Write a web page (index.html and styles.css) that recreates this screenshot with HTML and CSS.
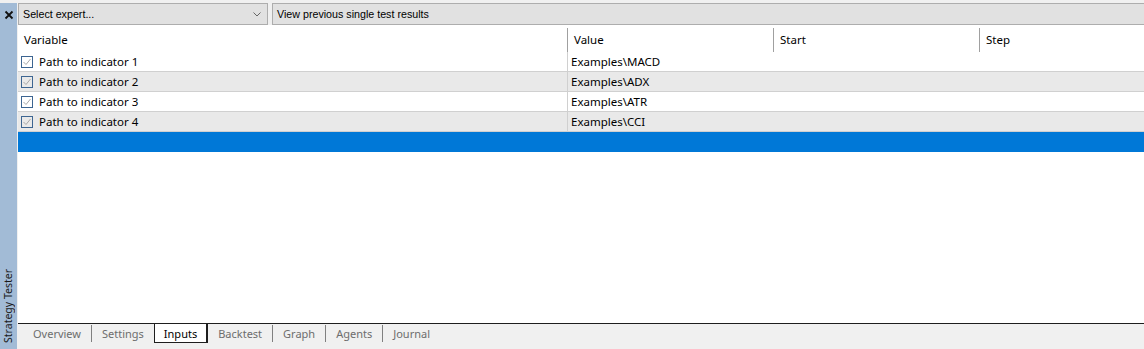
FILE: index.html
```html
<!DOCTYPE html>
<html>
<head>
<meta charset="utf-8">
<link rel="stylesheet" href="styles.css">
</head>
<body>
<div class="app">
  <aside class="sidebar">
    <svg class="close" width="10" height="10" viewBox="0 0 10 10"><path d="M1.5 1.5 L8.5 8.5 M8.5 1.5 L1.5 8.5" stroke="#111" stroke-width="1.8" fill="none"/></svg>
    <div class="side-title">Strategy Tester</div>
  </aside>
  <main class="main">
    <div class="toolbar">
      <div class="combo">
        <span>Select expert...</span>
        <svg class="chev" width="8" height="5" viewBox="0 0 8 5"><path d="M0.5 0.5 L4 4 L7.5 0.5" stroke="#666" stroke-width="1" fill="none"/></svg>
      </div>
      <div class="btn">View previous single test results</div>
    </div>
    <div class="table">
      <div class="thead">
        <div class="th">Variable</div>
        <div class="th sep">Value</div>
        <div class="th sep">Start</div>
        <div class="th sep">Step</div>
      </div>
      <div class="row">
        <div class="cell var"><span class="cb"><svg width="10" height="10" viewBox="0 0 10 10"><path d="M1.5 5 L4 7.5 L8.5 2" stroke="#a8a8a8" stroke-width="1" fill="none"/></svg></span>Path to indicator 1</div>
        <div class="cell val">Examples\MACD</div>
        <div class="cell"></div>
        <div class="cell"></div>
      </div>
      <div class="row alt">
        <div class="cell var"><span class="cb"><svg width="10" height="10" viewBox="0 0 10 10"><path d="M1.5 5 L4 7.5 L8.5 2" stroke="#a8a8a8" stroke-width="1" fill="none"/></svg></span>Path to indicator 2</div>
        <div class="cell val">Examples\ADX</div>
        <div class="cell"></div>
        <div class="cell"></div>
      </div>
      <div class="row">
        <div class="cell var"><span class="cb"><svg width="10" height="10" viewBox="0 0 10 10"><path d="M1.5 5 L4 7.5 L8.5 2" stroke="#a8a8a8" stroke-width="1" fill="none"/></svg></span>Path to indicator 3</div>
        <div class="cell val">Examples\ATR</div>
        <div class="cell"></div>
        <div class="cell"></div>
      </div>
      <div class="row alt">
        <div class="cell var"><span class="cb"><svg width="10" height="10" viewBox="0 0 10 10"><path d="M1.5 5 L4 7.5 L8.5 2" stroke="#a8a8a8" stroke-width="1" fill="none"/></svg></span>Path to indicator 4</div>
        <div class="cell val">Examples\CCI</div>
        <div class="cell"></div>
        <div class="cell"></div>
      </div>
      <div class="row selected"></div>
    </div>
    <nav class="tabs">
      <span class="tab">Overview</span>
      <span class="tsep"></span>
      <span class="tab">Settings</span>
      <span class="tab active">Inputs</span>
      <span class="tab">Backtest</span>
      <span class="tsep"></span>
      <span class="tab">Graph</span>
      <span class="tsep"></span>
      <span class="tab">Agents</span>
      <span class="tsep"></span>
      <span class="tab">Journal</span>
    </nav>
  </main>
</div>
</body>
</html>
```

FILE: styles.css
```css
* { box-sizing: border-box; }
html, body {
  margin: 0;
  padding: 0;
  width: 1144px;
  height: 349px;
  overflow: hidden;
  background: #f0f0f0;
  font-family: "Noto Sans", "Open Sans", sans-serif;
  font-size: 11.5px;
  color: #000;
}
.app {
  display: flex;
  height: 349px;
  padding-top: 3px;
}
.sidebar {
  width: 17px;
  flex: none;
  background: #a2bbd6;
  display: flex;
  flex-direction: column;
  align-items: center;
  justify-content: space-between;
  padding: 7px 0 6px 0;
}
.close { display: block; }
.side-title {
  writing-mode: vertical-rl;
  transform: rotate(180deg);
  font-size: 10.5px;
  color: #1a1a1a;
  line-height: 17px;
  white-space: nowrap;
}
.main {
  flex: 1;
  display: flex;
  flex-direction: column;
  margin-left: 1px;
  min-width: 0;
}
.toolbar {
  display: flex;
  gap: 4px;
  height: 22px;
  flex: none;
  background: #f0f0f0;
}
.combo, .btn {
  background: #e1e1e1;
  border: 1px solid #adadad;
  font-family: "Liberation Sans", Arial, sans-serif;
  font-size: 10.7px;
  display: flex;
  align-items: center;
  padding-left: 4px;
  height: 22px;
}
.combo {
  width: 250px;
  flex: none;
  justify-content: space-between;
  padding-right: 6px;
}
.chev { display: block; }
.btn {
  flex: 1;
  border-right: none;
}
.table {
  flex: 1;
  background: #fff;
  padding-top: 3px;
}
.thead, .row {
  display: grid;
  grid-template-columns: 549px 206px 206px 1fr;
}
.thead { height: 24px; }
.th {
  display: flex;
  align-items: center;
  padding-left: 6px;
  padding-bottom: 1px;
}
.th.sep { border-left: 1px solid #a0a0a0; }
.row {
  height: 20px;
  border-bottom: 1px solid #d0d0d0;
  background: #fff;
}
.row.alt { background: #e9e9e9; }
.row.selected {
  background: #0078d7;
  border-bottom: none;
}
.cell {
  display: flex;
  align-items: center;
  white-space: nowrap;
}
.cell.var { padding-left: 3px; }
.cell.val {
  border-left: 1px solid #d0d0d0;
  padding-left: 3px;
}
.cb {
  width: 12px;
  height: 12px;
  border: 1px solid #3d6591;
  background: transparent;
  margin-right: 6px;
  display: flex;
  align-items: center;
  justify-content: center;
}
.cb svg { display: block; }
.tabs {
  flex: none;
  height: 26px;
  border-top: 1px solid #1e1e1e;
  background: #f0f0f0;
  display: flex;
  align-items: flex-start;
  padding-left: 5px;
  font-size: 11px;
}
.tab {
  padding: 0 10px;
  height: 19px;
  line-height: 20px;
  color: #6d6d6d;
  white-space: nowrap;
}
.tab.active {
  background: #fff;
  color: #000;
  border-left: 1px solid #1e1e1e;
  border-right: 2px solid #1e1e1e;
  border-bottom: 1px solid #1e1e1e;
  padding: 0 9px 0 9px;
}
.tsep {
  width: 1px;
  height: 17px;
  background: #808080;
  margin-top: 1px;
}
```
